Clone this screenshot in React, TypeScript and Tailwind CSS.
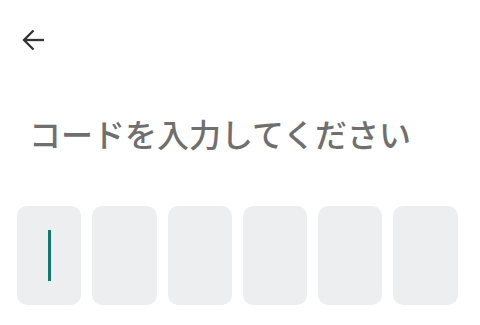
import React from "react"

const cells = [0, 1, 2, 3, 4, 5]

const App = () => {
  return (
    <div className="w-[480px] h-[325px] bg-white overflow-hidden" style={{ fontFamily: '"Noto Sans CJK JP", Roboto, sans-serif' }}>
      <div className="pt-[29px] pl-[22px]">
        <button className="block w-[22px] h-[22px]" aria-label="戻る">
          <svg width="22" height="22" viewBox="0 0 22 22" fill="none" stroke="#333333" strokeWidth="2.3">
            <path d="M22 11H2" />
            <path d="M11.5 1.5 2 11l9.5 9.5" />
          </svg>
        </button>
      </div>

      <h1 className="mt-[61px] pl-[29px] text-[32px] leading-[42px] font-medium text-[#6f6f6f]">
        コードを入力してください
      </h1>

      <div className="mt-[52px] pl-[17px] flex gap-[11px]">
        {cells.map((i) => (
          <div key={i} className="w-[64.3px] h-[99px] rounded-[10px] bg-[#eceef0] flex items-center justify-center">
            {i === 0 && <div className="w-[3px] h-[51px] bg-[#0f7b6c]" />}
          </div>
        ))}
      </div>
    </div>
  )
}

export default App
